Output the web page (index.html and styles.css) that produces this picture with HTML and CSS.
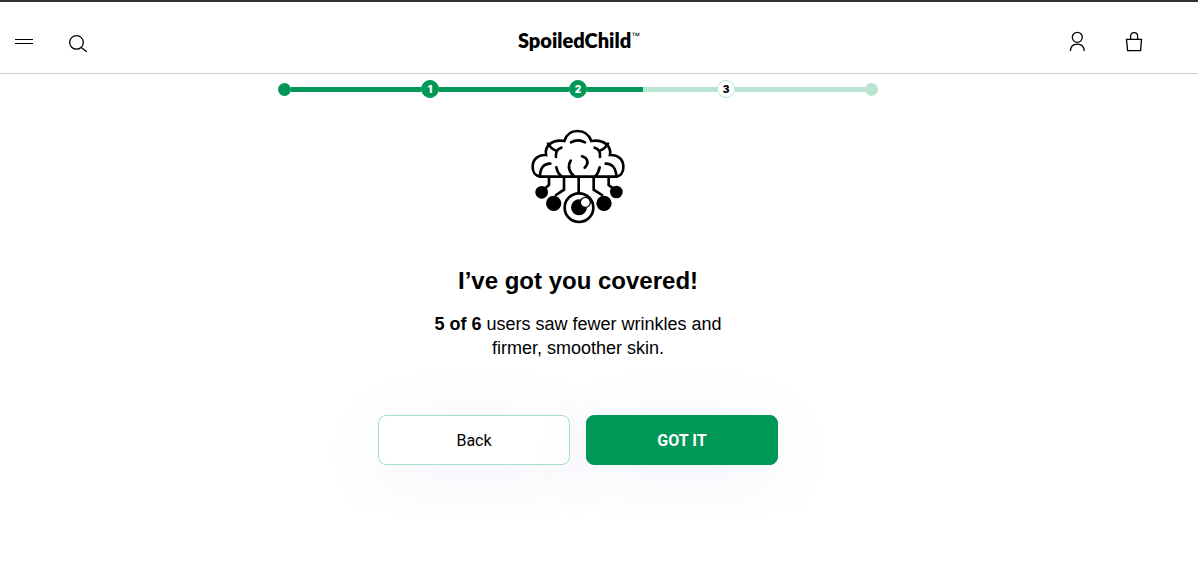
FILE: index.html
```html
<!DOCTYPE html>
<html lang="en">
<head>
<meta charset="utf-8">
<meta name="viewport" content="width=device-width, initial-scale=1">
<title>SpoiledChild</title>
<link rel="stylesheet" href="styles.css">
</head>
<body>
<header class="header">
  <div class="header-group">
    <button class="icon-button" type="button" aria-label="Menu">
      <svg class="menu-icon" width="20" height="20" viewBox="0 0 20 20"><path d="M1 7.5H19M1 11.5H19"/></svg>
    </button>
    <button class="icon-button" type="button" aria-label="Search">
      <svg width="20" height="20" viewBox="0 0 20 20"><circle cx="8.5" cy="10.4" r="6.8"/><path d="M13.2 15.4L18.8 19.7"/></svg>
    </button>
  </div>
  <a class="logo" href="#">SpoiledChild<span class="logo-mark">™</span></a>
  <div class="header-group header-group-end">
    <button class="icon-button" type="button" aria-label="Account">
      <svg width="20" height="20" viewBox="0 0 20 20"><circle cx="10.3" cy="5.3" r="5"/><path d="M3.4 19C3.6 14.6 6.4 12.2 10.3 12.2S17 14.6 17.2 19"/></svg>
    </button>
    <button class="icon-button" type="button" aria-label="Bag">
      <svg width="20" height="20" viewBox="0 0 20 20"><path d="M2.5 7.3H17.5L16.6 18.6H3.6ZM6.6 7.3V4C6.6 1.5 8 .7 10 .7S13.6 1.5 13.6 4V7.3"/></svg>
    </button>
  </div>
</header>
<main class="main">
  <ol class="progress" aria-label="Progress">
    <li class="dot"></li>
    <li class="bar bar-done"></li>
    <li class="step">1</li>
    <li class="bar bar-done"></li>
    <li class="step">2</li>
    <li class="bar"><span class="bar-fill" style="width:43%"></span></li>
    <li class="step step-next">3</li>
    <li class="bar"></li>
    <li class="dot dot-next"></li>
  </ol>
  <svg class="brain" viewBox="30 24 288 288" aria-hidden="true">
    <g class="brain-lines">
      <path d="M61 170C45 168 37 154 38 138C39 117 55 104 78 105C73 78 96 57 133 63C139 43 153 33 172 33S207 43 214 63C251 57 275 78 270 105C293 104 309 117 310 138C311 154 304 168 288 170Z"/>
      <path d="M153 67Q173 55 195 67M84 71Q94 87 106 91M124 83Q105 89 108 111M264 71Q254 87 242 91M224 83Q243 89 240 111M60 169C60 144 72 130 91 131M289 169C288 144 276 130 257 131M109 142Q112 159 124 169M239 142Q236 159 226 169M152 122C142 137 147 157 163 169M186 109C205 115 207 132 194 143"/>
      <path d="M87 171V195L74 206M132 171V209L108 225M176 171V218M221 171V209L246 225M266 171V195L280 206"/>
      <circle cx="177" cy="263" r="43"/>
    </g>
    <circle cx="65" cy="217" r="19"/><circle cx="289" cy="216" r="19"/>
    <circle cx="101" cy="250" r="23"/><circle cx="252" cy="250" r="23"/>
    <circle cx="177" cy="262" r="24"/>
    <circle class="brain-glint" cx="196" cy="247" r="15"/>
  </svg>
  <h1 class="title">I’ve got you covered!</h1>
  <p class="text"><strong>5 of 6</strong> users saw fewer wrinkles and firmer, smoother skin.</p>
  <div class="actions">
    <button class="button" type="button">Back</button>
    <button class="button button-primary" type="button">GOT IT</button>
  </div>
</main>
</body>
</html>
```
FILE: styles.css
```css
* { box-sizing: border-box; }
body {
  margin: 0;
  background: #fff;
  color: #000;
  font-family: "Liberation Sans", Arial, sans-serif;
}
.header {
  display: grid;
  grid-template-columns: 1fr auto 1fr;
  align-items: center;
  height: 74px;
  padding: 8px 54px 0 14px;
  border-top: 2px solid #333132;
  border-bottom: 1px solid #ccc;
}
.header-group { display: flex; gap: 34px; }
.header-group-end { justify-content: flex-end; gap: 37px; }
.icon-button { padding: 0; border: 0; background: none; cursor: pointer; }
.icon-button svg {
  display: block;
  fill: none;
  stroke: #000;
  stroke-width: 1.3;
  overflow: visible;
}
.icon-button .menu-icon { stroke-width: 1; }
.logo {
  display: flex;
  padding-bottom: 4px;
  color: #000;
  font-family: Lato, sans-serif;
  font-size: 20px;
  font-weight: 800;
  line-height: 24px;
  text-decoration: none;
}
.logo-mark {
  font-family: "Liberation Sans", Arial, sans-serif;
  font-size: 9px;
  font-weight: 400;
  line-height: 16px;
}
.main {
  display: flex;
  flex-direction: column;
  align-items: center;
  padding: 6px 42px 48px 0;
}
.progress {
  display: flex;
  align-items: center;
  width: 100%;
  max-width: 600px;
  margin: 0;
  padding: 0;
  list-style: none;
}
.dot { width: 13px; height: 13px; border-radius: 50%; background: #009757; }
.dot-next { background: #b8e4d2; }
.bar { flex: 1; height: 5px; background: #b8e4d2; }
.bar-done, .bar-fill { background: #009757; }
.bar-fill { display: block; height: 100%; }
.step {
  width: 18px;
  height: 18px;
  border: 1px solid #009757;
  border-radius: 50%;
  background: #009757;
  color: #fff;
  font-family: Inter, sans-serif;
  font-size: 10px;
  font-weight: 900;
  line-height: 16px;
  text-align: center;
}
.step-next { border-color: #b8e4d2; background: #fff; color: #000; }
.brain { width: 96px; height: 96px; margin-top: 30px; }
.brain-lines { fill: none; stroke: #000; stroke-width: 8; stroke-linecap: round; }
.brain-glint { fill: #fff; stroke: #000; stroke-width: 4; }
.title { margin: 40px 0 0; font-size: 24px; font-weight: 700; line-height: 34px; }
.text {
  max-width: 320px;
  margin: 14px 0 0;
  font-size: 18px;
  line-height: 24px;
  text-align: center;
}
.text strong { font-weight: 700; }
.actions { display: flex; gap: 16px; margin-top: 55px; }
.button {
  width: 192px;
  height: 50px;
  border: 1px solid #a5dfc8;
  border-radius: 8px;
  background: #fff;
  box-shadow: 0 14px 74px rgba(80, 50, 180, .07);
  color: #000;
  font-family: Roboto, sans-serif;
  font-size: 16px;
  cursor: pointer;
}
.button-primary { border-color: #009757; background: #009757; color: #fff; font-weight: 700; }
```
